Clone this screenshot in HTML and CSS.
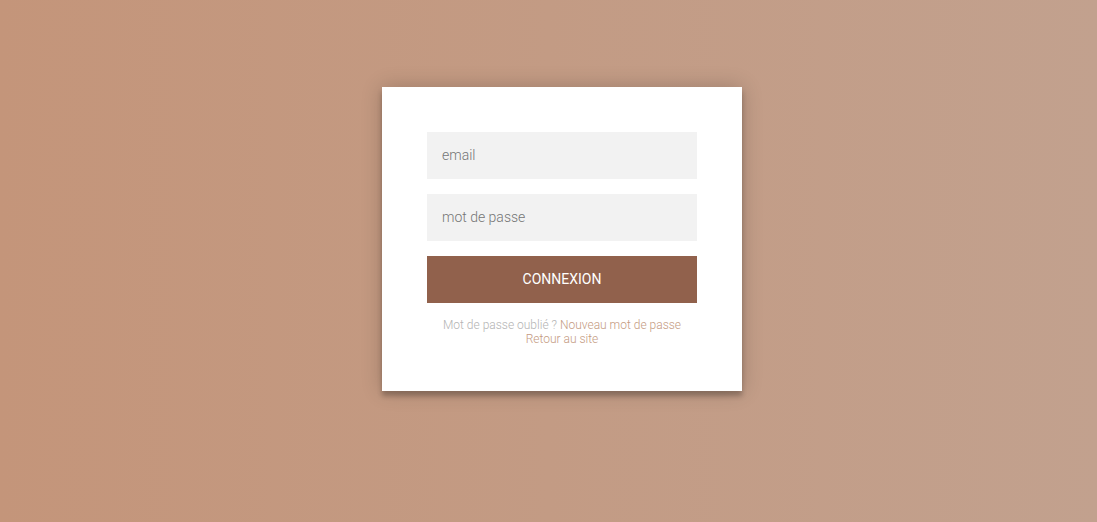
FILE: index.html
```html
<!DOCTYPE html>
<html lang="fr">
<head>
<meta charset="utf-8">
<title>Connexion</title>
<link rel="stylesheet" href="styles.css">
</head>
<body>
<div class="page">
  <div class="form">
    <form class="login-form">
      <input class="field" type="text" placeholder="email">
      <input class="field" type="password" placeholder="mot de passe">
      <button class="btn" type="button">CONNEXION</button>
      <p class="message">Mot de passe oublié ? <a href="#">Nouveau mot de passe</a><br><a href="#">Retour au site</a></p>
    </form>
  </div>
</div>
</body>
</html>
```

FILE: styles.css
```css
html, body {
  margin: 0;
  padding: 0;
  height: 100%;
}
body {
  background: linear-gradient(90deg, #c4957a 0%, #c2a18e 100%);
  font-family: Roboto, "Liberation Sans", sans-serif;
}
.page {
  display: flex;
  justify-content: center;
  align-items: flex-start;
  padding: 87px 0 0 27px;
}
.form {
  width: 360px;
  box-sizing: border-box;
  background: #ffffff;
  padding: 45px;
  text-align: center;
  box-shadow: 0 0 20px 0 rgba(0,0,0,0.2), 0 5px 5px 0 rgba(0,0,0,0.24);
}
.login-form {
  display: flex;
  flex-direction: column;
  margin: 0;
}
.field {
  font-family: Roboto, "Liberation Sans", sans-serif;
  outline: 0;
  background: #f2f2f2;
  width: 100%;
  border: 0;
  margin: 0 0 15px;
  padding: 0 15px 2px;
  box-sizing: border-box;
  font-size: 14px;
  height: 47px;
  color: #333;
}
.field::placeholder {
  color: #757575;
  font-weight: 300;
}
.btn {
  font-family: Roboto, "Liberation Sans", sans-serif;
  text-transform: uppercase;
  outline: 0;
  background: #91614c;
  width: 100%;
  border: 0;
  padding: 0 15px 1px;
  height: 47px;
  color: #ffffff;
  font-size: 14px;
  font-weight: 400;
  cursor: pointer;
}
.message {
  margin: 15px 0 0;
  color: #b3b3b3;
  font-size: 12px;
  line-height: 14px;
  font-weight: 300;
}
.message a {
  color: #c49a7f;
  text-decoration: none;
}
```
